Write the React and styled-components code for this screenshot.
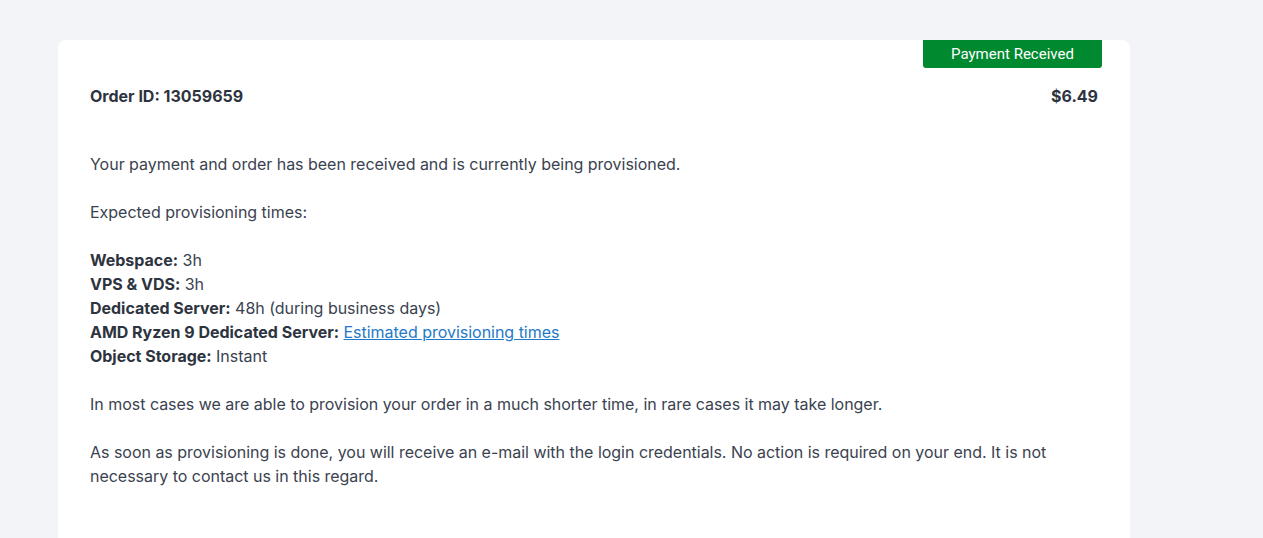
import React from "react"
import styled, { createGlobalStyle } from "styled-components"

const Global = createGlobalStyle`
    html, body {
        margin: 0;
        background: #f3f4f7;
        font-family: Inter, "Noto Sans", sans-serif;
    }
`

const Page = styled.div`
    padding: 40px 133px 0 58px;
    min-height: 498px;
`

const Card = styled.div`
    background: #ffffff;
    border-radius: 8px 8px 0 0;
    padding: 0 32px 40px;
    min-height: 458px;
    box-sizing: border-box;
    color: #3a4250;
    font-size: 16px;
    line-height: 24px;
`

const BadgeRow = styled.div`
    display: flex;
    justify-content: flex-end;
    margin-right: -4px;
`

const Badge = styled.span`
    background: #00892e;
    color: #ffffff;
    font-family: Roboto, "Noto Sans", sans-serif;
    font-size: 15px;
    line-height: 28px;
    width: 179px;
    text-align: center;
    border-radius: 0 0 3px 3px;
`

const Head = styled.div`
    display: flex;
    justify-content: space-between;
    margin-top: 16px;
    font-weight: 700;
    color: #2d3440;
`

const Body = styled.div`
    margin-top: 44px;
    letter-spacing: -0.02px;

    p {
        margin: 0 0 24px;
    }

    b {
        color: #2d3440;
    }

    a {
        color: #2379c8;
    }
`

const Times = [
    ["Webspace:", "3h"],
    ["VPS & VDS:", "3h"],
    ["Dedicated Server:", "48h (during business days)"],
    ["AMD Ryzen 9 Dedicated Server:", null],
    ["Object Storage:", "Instant"]
]

export default function App() {
    return (
        <>
            <Global />
            <Page>
                <Card>
                    <BadgeRow>
                        <Badge>Payment Received</Badge>
                    </BadgeRow>
                    <Head>
                        <span>Order ID: 13059659</span>
                        <span>$6.49</span>
                    </Head>
                    <Body>
                        <p>Your payment and order has been received and is currently being provisioned.</p>
                        <p>Expected provisioning times:</p>
                        <p>
                            {Times.map(([k, v]) => (
                                <React.Fragment key={k}>
                                    <b>{k}</b>{" "}
                                    {v ?? <a href="#">Estimated provisioning times</a>}
                                    <br />
                                </React.Fragment>
                            ))}
                        </p>
                        <p>In most cases we are able to provision your order in a much shorter time, in rare cases it may take longer.</p>
                        <p>
                            As soon as provisioning is done, you will receive an e-mail with the login credentials. No action is required on your end. It is not necessary to contact us in this regard.
                        </p>
                    </Body>
                </Card>
            </Page>
        </>
    )
}
